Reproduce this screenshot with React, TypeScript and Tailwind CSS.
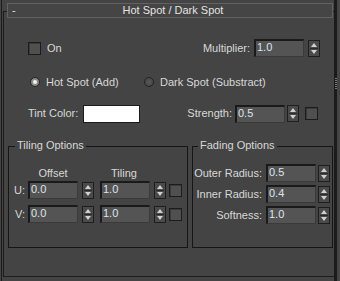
import React from 'react';

const font = { fontFamily: '"Liberation Sans", Arial, sans-serif' };

function Spinner({ className = '' }: { className?: string }) {
  return (
    <div className={`w-[12px] h-[17px] border border-[#1e1e1e] bg-[#4a4a4a] flex flex-col items-center justify-between py-[2px] ${className}`}>
      <svg width="6" height="4" viewBox="0 0 6 4">
        <path d="M3 0 L6 4 L0 4 Z" fill="#d0d0d0" />
      </svg>
      <div className="w-[8px] h-px bg-[#2a2a2a]" />
      <svg width="6" height="4" viewBox="0 0 6 4">
        <path d="M0 0 L6 0 L3 4 Z" fill="#d0d0d0" />
      </svg>
    </div>
  );
}

function NumInput({ value, className = '' }: { value: string; className?: string }) {
  return (
    <div className={`w-[50px] h-[18px] bg-[#545454] border-t-2 border-l-2 border-r border-b border-t-[#1a1a1a] border-l-[#1a1a1a] border-r-[#3a3a3a] border-b-[#3a3a3a] pl-[1px] text-[#dde4ee] leading-[12px] ${className}`}>
      {value}
    </div>
  );
}

function Check({ className = '' }: { className?: string }) {
  return (
    <div className={`w-[13px] h-[13px] border border-[#1c1c1c] bg-[#505050] shadow-[inset_1px_1px_0_#3a3a3a] ${className}`} />
  );
}

function Radio({ checked }: { checked?: boolean }) {
  return (
    <div className={`w-[10px] h-[10px] rounded-full border border-[#222222] flex items-center justify-center ${checked ? 'bg-[#8a8a8a]' : 'bg-[#4c4c4c]'}`}>
      <div className={`w-[4px] h-[4px] rounded-full ${checked ? 'bg-[#f2f2f2]' : 'bg-[#555555]'}`} />
    </div>
  );
}

function Group({ title, className = '', titleLeft, children }: { title: string; className?: string; titleLeft: string; children: React.ReactNode }) {
  return (
    <div className={`relative border border-[#161616] h-[102px] ${className}`}>
      <div className={`absolute -top-[8px] ${titleLeft} px-[2px] bg-[#444444] leading-[13px]`}>{title}</div>
      {children}
    </div>
  );
}

export default function App() {
  return (
    <div className="w-[340px] h-[281px] bg-[#444444] flex overflow-hidden text-[11px] text-[#d8d8d8]" style={font}>
      <div className="w-[334px] h-full pl-[1px]">
        <div className="h-full border-l border-[#1c1c1c] pl-[1px] pt-[11px]">
          <div className="h-[266px] border-l border-t border-b border-[#1c1c1c]">
            {/* rollout header */}
            <div className="-mt-[9px] ml-[3px] w-[326px] h-[15px] border border-[#626262] bg-[#454545] flex items-center leading-[13px]">
              <span className="w-[14px] pl-[4px] text-[#e0e0e0]">-</span>
              <span className="flex-1 text-center pr-[8px] text-[#e4e4e4]">Hot Spot / Dark Spot</span>
            </div>

            <div className="mt-[21px] h-[18px] flex items-center pl-[24px] pr-[14px]">
              <Check />
              <span className="ml-[6px]">On</span>
              <span className="ml-auto">Multiplier:</span>
              <NumInput value="1.0" className="ml-[4px]" />
              <Spinner className="ml-[4px]" />
            </div>

            <div className="mt-[18px] h-[14px] flex items-center pl-[26px]">
              <div className="w-[114px] flex items-center">
                <Radio checked />
                <span className="ml-[6px]">Hot Spot (Add)</span>
              </div>
              <Radio />
              <span className="ml-[6px]">Dark Spot (Substract)</span>
            </div>

            <div className="mt-[15px] h-[19px] flex items-center pl-[24px] pr-[16px]">
              <span>Tint Color:</span>
              <div className="ml-[5px] w-[57px] h-[18px] bg-white border border-[#1a1a1a]" />
              <span className="ml-auto">Strength:</span>
              <NumInput value="0.5" className="ml-[3px]" />
              <Spinner className="ml-[2px]" />
              <Check className="ml-[6px]" />
            </div>

            <div className="mt-[23px] ml-[4px] flex gap-[4px]">
              <Group title="Tiling Options" titleLeft="left-[6px]" className="w-[180px]">
                <div className="mt-[20px] pl-[18px] flex leading-[13px]">
                  <div className="w-[50px] text-center ml-[1px]">Offset</div>
                  <div className="w-[50px] text-center ml-[21px]">Tiling</div>
                </div>
                {['U:', 'V:'].map((l, i) => (
                  <div key={l} className={`${i === 0 ? 'mt-[1px]' : 'mt-[6px]'} h-[18px] flex items-center pl-[5px]`}>
                    <span className="w-[11px] text-right">{l}</span>
                    <NumInput value="0.0" className="ml-[3px]" />
                    <Spinner className="ml-[4px]" />
                    <NumInput value="1.0" className="ml-[6px]" />
                    <Spinner className="ml-[4px]" />
                    <Check className="ml-[3px]" />
                  </div>
                ))}
              </Group>
              <Group title="Fading Options" titleLeft="left-[5px]" className="w-[141px]">
                <div className="mt-[17px] flex flex-col gap-[3px]">
                  {[
                    ['Outer Radius:', '0.5'],
                    ['Inner Radius:', '0.4'],
                    ['Softness:', '1.0'],
                  ].map(([l, v]) => (
                    <div key={l} className="h-[18px] flex items-center">
                      <span className="w-[69px] text-right">{l}</span>
                      <NumInput value={v} className="ml-[4px]" />
                      <Spinner className="ml-[2px]" />
                    </div>
                  ))}
                </div>
              </Group>
            </div>
          </div>
        </div>
      </div>
      <div className="w-[3px] h-full bg-[#1b1b1b] flex flex-col items-center pt-[78px] gap-[1px]">
        {[0, 1, 2, 3, 4, 5].map((i) => (
          <div key={i} className="w-[2px] h-px bg-[#7a7a7a]" />
        ))}
      </div>
      <div className="flex-1 h-full bg-[#444444]" />
    </div>
  );
}
